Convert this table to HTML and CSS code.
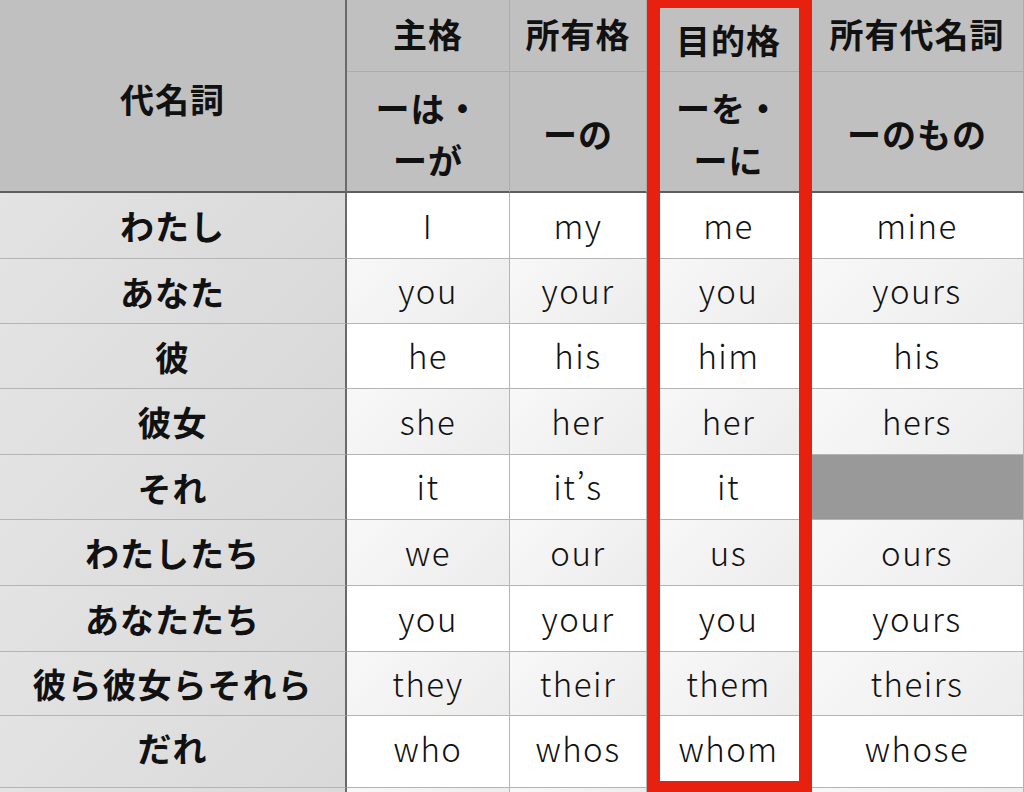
FILE: index.html
```html
<!DOCTYPE html>
<html lang="ja">
<head>
<meta charset="utf-8">
<title>代名詞</title>
<link rel="stylesheet" href="styles.css">
</head>
<body>
<div class="sheet">
  <div class="grid">
    <div class="cell head corner">代名詞</div>
    <div class="cell head top">主格</div>
    <div class="cell head top">所有格</div>
    <div class="cell head top low">目的格</div>
    <div class="cell head top">所有代名詞</div>
    <div class="cell head sub">ーは・<br>ーが</div>
    <div class="cell head sub">ーの</div>
    <div class="cell head sub">ーを・<br>ーに</div>
    <div class="cell head sub">ーのもの</div>

    <div class="row">
      <div class="cell name">わたし</div><div class="cell en">I</div><div class="cell en">my</div><div class="cell en">me</div><div class="cell en">mine</div>
    </div>
    <div class="row alt">
      <div class="cell name">あなた</div><div class="cell en">you</div><div class="cell en">your</div><div class="cell en">you</div><div class="cell en">yours</div>
    </div>
    <div class="row">
      <div class="cell name">彼</div><div class="cell en">he</div><div class="cell en">his</div><div class="cell en">him</div><div class="cell en">his</div>
    </div>
    <div class="row alt">
      <div class="cell name">彼女</div><div class="cell en">she</div><div class="cell en">her</div><div class="cell en">her</div><div class="cell en">hers</div>
    </div>
    <div class="row">
      <div class="cell name">それ</div><div class="cell en">it</div><div class="cell en">it’s</div><div class="cell en">it</div><div class="cell en blank"></div>
    </div>
    <div class="row alt">
      <div class="cell name">わたしたち</div><div class="cell en">we</div><div class="cell en">our</div><div class="cell en">us</div><div class="cell en">ours</div>
    </div>
    <div class="row">
      <div class="cell name">あなたたち</div><div class="cell en">you</div><div class="cell en">your</div><div class="cell en">you</div><div class="cell en">yours</div>
    </div>
    <div class="row alt">
      <div class="cell name">彼ら彼女らそれら</div><div class="cell en">they</div><div class="cell en">their</div><div class="cell en">them</div><div class="cell en">theirs</div>
    </div>
    <div class="row last">
      <div class="cell name">だれ</div><div class="cell en">who</div><div class="cell en">whos</div><div class="cell en">whom</div><div class="cell en">whose</div>
    </div>
    <div class="row alt">
      <div class="cell name"></div><div class="cell en"></div><div class="cell en"></div><div class="cell en"></div><div class="cell en"></div>
    </div>
  </div>
  <div class="highlight"></div>
</div>
</body>
</html>
```

FILE: styles.css
```css
html, body {
  margin: 0;
  padding: 0;
  overflow: hidden;
  background: #ffffff;
}

.sheet {
  position: relative;
  width: 1024px;
  height: 792px;
  overflow: hidden;
  font-family: "Noto Sans CJK JP", "Noto Sans", sans-serif;
  color: #111111;
}

.grid {
  display: grid;
  grid-template-columns: 347px 163px 137px 164px 213px;
  grid-template-rows: 72px 121px 66px 65px 65px 66px 65px 66px 66px 64px 72px 20px;
}

.row {
  display: contents;
}

.cell {
  box-sizing: border-box;
  display: flex;
  align-items: center;
  justify-content: center;
  text-align: center;
  border-right: 1px solid #b4b4b4;
  border-bottom: 1px solid #b4b4b4;
  background: #ffffff;
}

.head {
  background: #c0c0c0;
  font-weight: 700;
  font-size: 34px;
  letter-spacing: 1px;
  line-height: 52px;
  border-right-color: #acacac;
  border-bottom-color: #acacac;
}

.corner {
  grid-row: 1 / span 2;
  border-right: 2px solid #6a6a6a;
  border-bottom: 2px solid #5e5e5e;
  padding-top: 6px;
}

.top {
  padding-top: 0;
  padding-bottom: 4px;
}

.low {
  padding-top: 8px;
  padding-bottom: 0;
}

.sub {
  border-bottom: 2px solid #5e5e5e;
  padding-top: 4px;
}

.name {
  background: linear-gradient(135deg, #e3e3e3 0%, #d9d9d9 100%);
  font-weight: 700;
  font-size: 34px;
  letter-spacing: 1px;
  border-right: 2px solid #6a6a6a;
}

.en {
  font-weight: 300;
  font-size: 33px;
  letter-spacing: 1.5px;
  padding-bottom: 2px;
}

.last .cell {
  padding-bottom: 8px;
}

.alt .en {
  background: linear-gradient(135deg, #f8f8f8 0%, #ececec 100%);
}

.blank {
  background: #999999;
}

.highlight {
  position: absolute;
  left: 647px;
  top: -5px;
  width: 165px;
  height: 799px;
  box-sizing: border-box;
  border: 13px solid #e8200f;
}
```
